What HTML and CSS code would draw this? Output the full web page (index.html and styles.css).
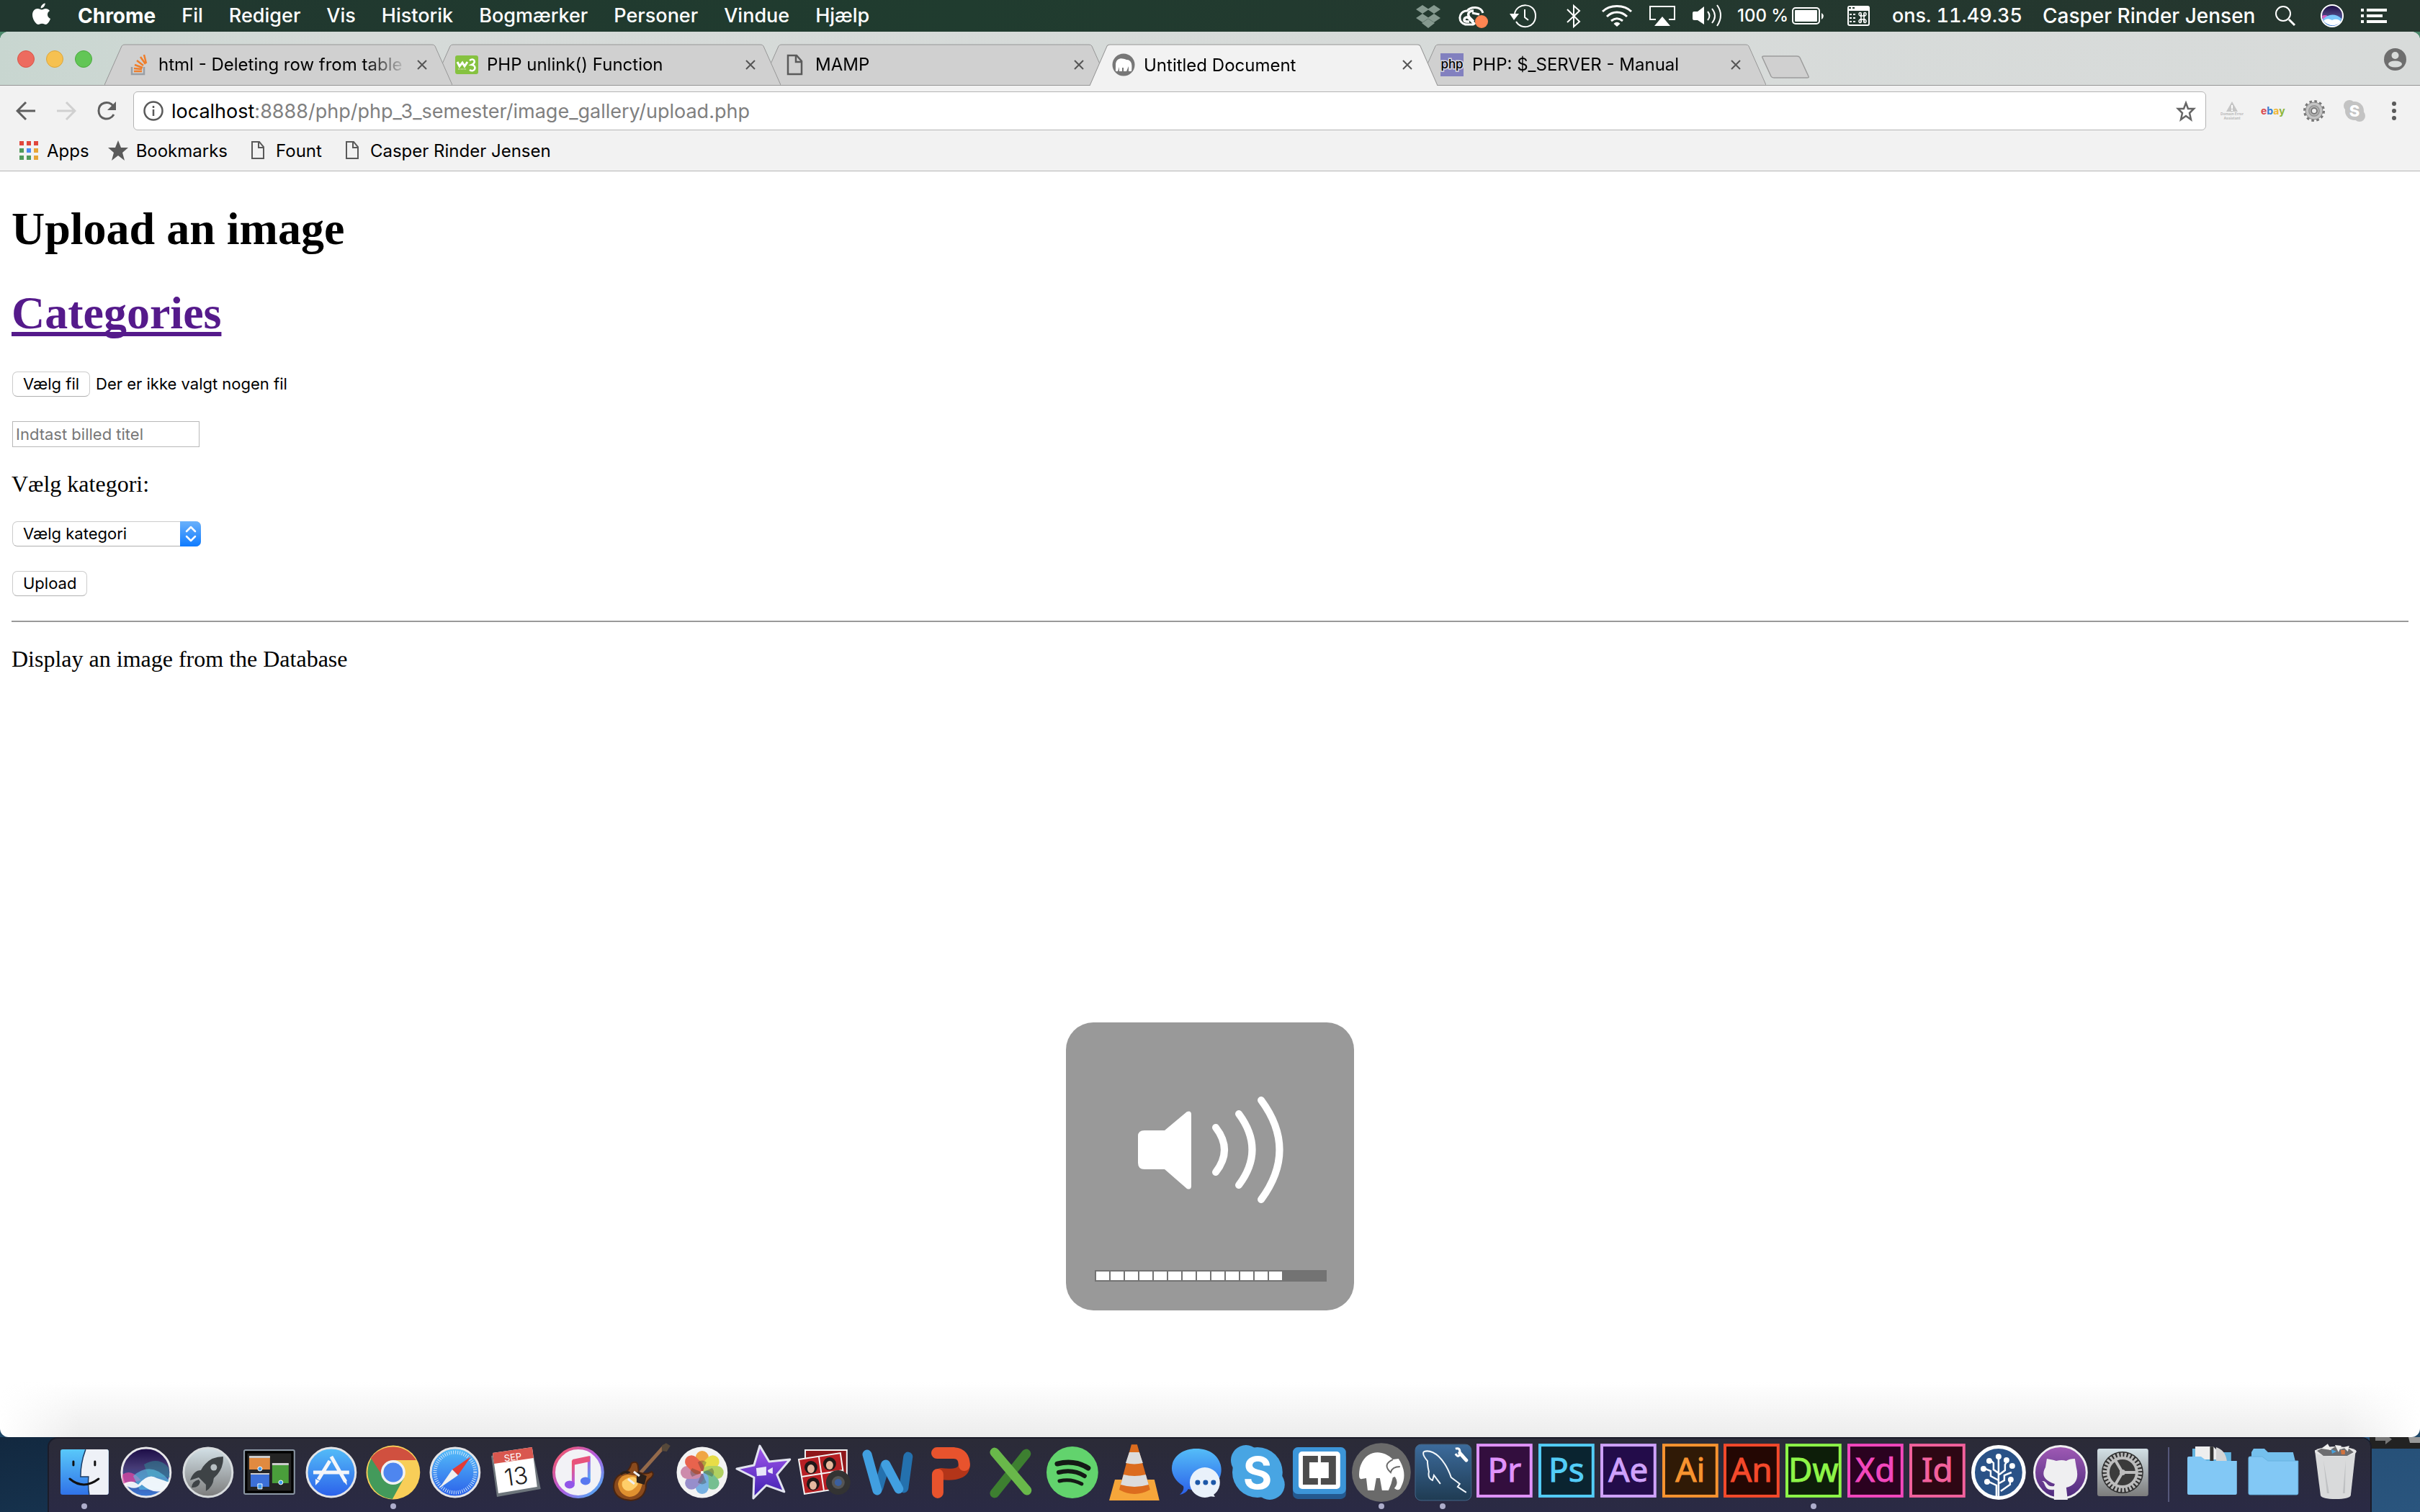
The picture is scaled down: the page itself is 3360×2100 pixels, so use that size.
FILE: index.html
```html
<!DOCTYPE html>
<html lang="da">
<head>
<meta charset="utf-8">
<title>Untitled Document</title>
<link rel="stylesheet" href="styles.css">
</head>
<body>
<header class="menubar">
  <nav class="menus" aria-label="Menulinje">
    <button class="menu-logo" aria-label="Apple"><svg width="28" height="44" viewBox="0 0 28 44"><path fill="#fff" d="M18.700 4.500c.3 3-2.700 7-6 7-.4-3.200 2.800-6.600 6-7zM19.500 12c2 0 4.200 1 5.500 3-4.500 2.800-3.800 9 1 11-1.200 3.300-3.800 8-6.600 8-2 0-2.600-1.200-5-1.200S11.200 34 9.300 34C5.700 34 1 26.500 1 20.700 1 15 4.500 12 8.300 12c2.400 0 4 1.400 5.700 1.400 1.600 0 3.200-1.400 5.500-1.400z"/></svg></button>
    <button class="menu menu-app">Chrome</button>
    <button class="menu">Fil</button>
    <button class="menu">Rediger</button>
    <button class="menu">Vis</button>
    <button class="menu">Historik</button>
    <button class="menu">Bogmærker</button>
    <button class="menu">Personer</button>
    <button class="menu">Vindue</button>
    <button class="menu">Hjælp</button>
  </nav>
  <div class="status">
    <svg width="58" height="44" viewBox="1954 0 58 44" fill="#85998f"><path d="M1975 7l9 6-9 6-9-6zM1991 7l9 6-9 6-9-6zM1975 19l9 6-9 6-9-6zM1991 19l9 6-9 6-9-6zM1974 32l9-6 9 6-9 7z"/></svg>
    <svg width="69" height="44" viewBox="2012 0 69 44" fill="none" stroke="#fff"><path stroke-width="3" d="M2046 34h-9c-14 0-13-19 0-19 5-6 19-7 22 3"/><path stroke-width="3.500" d="M2048 34l-9-9c-5-4-9 5-3 5h4M2046 15c-8 0-9 6-5 10l5 5"/><path stroke-width="3" d="M2044 18l10 2"/><circle cx="2057" cy="30" r="9" fill="#ff8552" stroke="none"/></svg>
    <svg width="73" height="44" viewBox="2081 0 73 44" fill="none" stroke="#fff" stroke-width="2"><path d="M2103 19c3-16 29-16 29 3 0 17-20 20-27 8M2117 13v11l5 4"/><path fill="#fff" stroke="none" d="M2096 19h13l-7 9z"/></svg>
    <svg width="55" height="44" viewBox="2154 0 55 44" fill="none" stroke="#fff" stroke-width="2"><path d="M2176 13l17 17-8 7V8l8 7-17 16"/></svg>
    <svg width="69" height="44" viewBox="2209 0 69 44" fill="none" stroke="#fff" stroke-width="3"><path d="M2225 16c10-10 30-10 40 0M2231 23c8-8 20-8 28 0M2237 29c5-4 11-4 16 0"/><path fill="#fff" stroke="none" d="M2240.500 33c3-3 6-3 9 0l-4.500 4z"/></svg>
    <svg width="60" height="44" viewBox="2278 0 60 44"><path fill="none" stroke="#fff" stroke-width="2" d="M2299 27h-8V9h34v18h-8"/><path fill="#fff" d="M2308 23l11 13h-22z"/></svg>
    <svg width="64" height="44" viewBox="2338 0 64 44" fill="none" stroke="#fff" stroke-width="2"><path fill="#fff" stroke="none" d="M2350 18q0-2 2-2h5l9-7v25l-9-6h-5q-2 0-2-2z"/><path d="M2371 16q5 6 0 12M2377 12q8 10 0 20M2384 7q10 14 0 29"/></svg>
    <span class="percent">100 %</span>
    <svg width="65" height="44" viewBox="2484 0 65 44"><rect x="2489" y="11" width="37" height="22" rx="4" fill="none" stroke="#fff" stroke-width="2"/><rect x="2492" y="14" width="31" height="16" rx="1" fill="#fff"/><path fill="#fff" d="M2529 18q6 4 0 9z"/></svg>
    <svg width="68" height="44" viewBox="2549 0 68 44"><rect x="2566" y="9" width="29" height="26" rx="2" fill="none" stroke="#fff" stroke-width="2"/><path fill="#fff" d="M2566 9h29v6h-29z"/><path stroke="#23392f" stroke-width="2" stroke-dasharray="3 2" d="M2567 11h10"/><path stroke="#fff" stroke-width="2" stroke-dasharray="3 2" d="M2568 20h8M2568 25h8M2568 30h8"/><path fill="none" stroke="#fff" stroke-width="1.500" d="M2582 22h8M2582 27h8M2584 19v12M2588 19v12"/><path fill="none" stroke="#fff" stroke-width="1.500" d="M2584 22c-5 0-3-6 0-4zM2588 22c5 0 3-6 0-4zM2584 27c-5 0-3 6 0 4zM2588 27c5 0 3 6 0 4z"/></svg>
    <time class="clock">ons. 11.49.35</time>
    <span class="user">Casper Rinder Jensen</span>
    <svg width="64" height="44" viewBox="3141 0 64 44" fill="none" stroke="#fff" stroke-width="2"><circle cx="3170" cy="19" r="10"/><path stroke-width="3" d="M3178 27l8 8"/></svg>
    <svg width="61" height="44" viewBox="3205 0 61 44"><circle cx="3238" cy="22" r="15" fill="url(#siri)" stroke="#fff" stroke-width="2"/><path fill="#d95fc0" d="M3224 22q7-3 11 4l-9 3z"/><path fill="#7cc7fb" d="M3225 27c7-8 18-9 26-1-3 11-20 13-26 1z"/><path fill="#fff" d="M3226 29c6-5 9-2 12-1 4-2 9-2 12 2-5 7-17 7-24-1z"/></svg>
    <svg class="status-list" width="54" height="44" viewBox="3266 0 54 44" fill="#fff"><path d="M3278 12h4v4h-4zM3278 20h4v4h-4zM3278 28h4v4h-4zM3286 12h28v4h-28zM3286 20h22v4h-22zM3286 28h28v4h-28z"/></svg>
  </div>
</header>

<div class="window">
  <div class="tabstrip">
    <div class="lights">
      <button class="light light-close" aria-label="Luk"></button>
      <button class="light light-min" aria-label="Minimer"></button>
      <button class="light light-zoom" aria-label="Zoom"></button>
    </div>
    <div class="tab tab-1">
      <svg class="tab-shape" viewBox="0 0 483 57" preserveAspectRatio="none"><path d="M0 57L24 3q1-2 4-2h427q3 0 4 2l24 54"/></svg>
      <svg class="favicon" viewBox="0 0 32 32" fill="none" stroke-width="2.500"><path stroke="#9a9fa5" d="M7 19v10h17V19"/><path stroke="#ef7e2b" d="M10 25h11M10 21l11 1M11 16l11 4M14 10l9 7M19 5l7 10M24 2l3 12"/></svg>
      <span class="tab-title">html - Deleting row from table a</span>
      <button class="tab-close" aria-label="Luk fane"><svg viewBox="0 0 16 16"><path d="M2 2l12 12M14 2L2 14"/></svg></button>
    </div>
    <div class="tab tab-2">
      <svg class="tab-shape" viewBox="0 0 483 57" preserveAspectRatio="none"><path d="M0 57L24 3q1-2 4-2h427q3 0 4 2l24 54"/></svg>
      <svg class="favicon" viewBox="0 0 32 32"><rect y="3" width="32" height="26" rx="3" fill="#86c240"/><path fill="none" stroke="#fff" stroke-width="3" d="M3 12l3 6 4-5 3 5 4-6"/><path fill="none" stroke="#fff" stroke-width="2.500" d="M20 10c6-5 10 3 3 6 8 1 4 12-3 7"/><path stroke="#fff" stroke-width="1" stroke-dasharray="1 1" d="M4 22h12"/></svg>
      <span class="tab-title">PHP unlink() Function</span>
      <button class="tab-close" aria-label="Luk fane"><svg viewBox="0 0 16 16"><path d="M2 2l12 12M14 2L2 14"/></svg></button>
    </div>
    <div class="tab tab-3">
      <svg class="tab-shape" viewBox="0 0 483 57" preserveAspectRatio="none"><path d="M0 57L24 3q1-2 4-2h427q3 0 4 2l24 54"/></svg>
      <svg class="favicon" viewBox="0 0 32 32" fill="none" stroke="#5a5a5a" stroke-width="2.500"><path d="M6 3h12l7 8v18H6zM17 3v9h8"/></svg>
      <span class="tab-title">MAMP</span>
      <button class="tab-close" aria-label="Luk fane"><svg viewBox="0 0 16 16"><path d="M2 2l12 12M14 2L2 14"/></svg></button>
    </div>
    <div class="tab tab-4 tab-active">
      <svg class="tab-shape" viewBox="0 0 483 57" preserveAspectRatio="none"><path d="M0 57L24 3q1-2 4-2h427q3 0 4 2l24 54"/></svg>
      <svg class="favicon" viewBox="0 0 32 32"><circle cx="16" cy="16" r="15.500" fill="#777"/><path fill="#fff" d="M5 25V15c1-9 9-9 15-6 8 0 8 8 7 16h-4v-7l-3 7h-4v-5h-2v5h-4v-6l-2 6z"/></svg>
      <span class="tab-title">Untitled Document</span>
      <button class="tab-close" aria-label="Luk fane"><svg viewBox="0 0 16 16"><path d="M2 2l12 12M14 2L2 14"/></svg></button>
    </div>
    <div class="tab tab-5">
      <svg class="tab-shape" viewBox="0 0 483 57" preserveAspectRatio="none"><path d="M0 57L24 3q1-2 4-2h427q3 0 4 2l24 54"/></svg>
      <svg class="favicon" viewBox="0 0 32 32"><path fill="#8280bf" d="M0 0h32v32H0z"/><text x="16" y="21" text-anchor="middle" font-family="Inter, sans-serif" font-size="17" font-weight="500" stroke="#d8d8e0" stroke-width="3" paint-order="stroke">php</text></svg>
      <span class="tab-title">PHP: $_SERVER - Manual</span>
      <button class="tab-close" aria-label="Luk fane"><svg viewBox="0 0 16 16"><path d="M2 2l12 12M14 2L2 14"/></svg></button>
    </div>
    <button class="newtab" aria-label="Ny fane"><svg width="68" height="34" viewBox="0 0 68 34"><path fill="#d0d0d0" stroke="#9c9c9c" stroke-width="1.500" d="M3 2h46q3 0 4 2l12 26q1 2-2 2H17q-3 0-4-2L1 4q-1-2 2-2z"/></svg></button>
    <button class="profile" aria-label="Profil"><svg width="31" height="31" viewBox="0 0 31 31"><circle cx="15.500" cy="15.500" r="15.500" fill="#6e6e6e"/><circle cx="15.500" cy="10" r="5" fill="#d8dbda"/><ellipse cx="15.500" cy="22" rx="9.500" ry="4.500" fill="#d8dbda"/></svg></button>
  </div>

  <div class="toolbar">
    <button class="tool" aria-label="Tilbage"><svg viewBox="0 0 28 28" stroke="#5f5f5f"><path d="M27 14H3M14 2L2 14l12 12"/></svg></button>
    <button class="tool" aria-label="Frem"><svg viewBox="0 0 28 28" stroke="#d0d0d0"><path d="M1 14h24M14 2l12 12-12 12"/></svg></button>
    <button class="tool" aria-label="Genindlæs"><svg viewBox="0 0 28 28" stroke="#5f5f5f"><path d="M23 7C17-1 3 2 3 14s15 15 21 5"/><path fill="#5f5f5f" stroke="none" d="M27 1v12H15z"/></svg></button>
    <div class="omnibox">
      <svg class="info" viewBox="0 0 28 28" fill="none" stroke="#5a5a5a" stroke-width="2.500"><circle cx="14" cy="14" r="12.500"/><path d="M14 12v9M14 7v3"/></svg>
      <a class="url" href="#"><span class="host">localhost</span>:8888/php/php_3_semester/image_gallery/upload.php</a>
      <svg class="bookmark-star" viewBox="0 0 30 30" fill="none" stroke="#666" stroke-width="2.500"><path d="M15 4l3 8h8l-6 6 2 9-7-5-7 5 2-9-6-6h8z"/></svg>
    </div>
    <div class="extensions">
      <svg width="32" height="32" viewBox="0 0 32 32"><path fill="#c6c6c6" d="M16 3l8 14H8z"/><path stroke="#fff" stroke-width="2" d="M16 8v5M16 14v2"/><text x="16" y="22" text-anchor="middle" font-family="Inter, sans-serif" font-size="5" font-weight="700" fill="#bbb">Domain Error</text><text x="16" y="28" text-anchor="middle" font-family="Inter, sans-serif" font-size="5" font-weight="700" fill="#bbb">Assistant</text></svg>
      <svg width="34" height="32" viewBox="0 0 34 32" font-family="Inter, sans-serif" font-size="14" font-weight="700"><text x="0" y="21"><tspan fill="#d9454a">e</tspan><tspan fill="#3b7dd0">b</tspan><tspan fill="#f0b735">a</tspan><tspan fill="#8db63b">y</tspan></text></svg>
      <svg width="32" height="32" viewBox="0 0 32 32"><circle cx="16" cy="16" r="13" fill="none" stroke="#777" stroke-width="4" stroke-dasharray="3.500 3.300"/><circle cx="16" cy="16" r="12" fill="#c4c4c4" stroke="#888"/><circle cx="16" cy="16" r="7" fill="none" stroke="#999" stroke-width="2"/><circle cx="16" cy="16" r="4" fill="#eee" stroke="#777" stroke-width="2"/></svg>
      <svg width="32" height="32" viewBox="0 0 32 32"><circle cx="16" cy="16" r="13" fill="#c3c3c3"/><circle cx="9" cy="9" r="8" fill="#c3c3c3"/><circle cx="23" cy="23" r="8" fill="#c3c3c3"/><text x="16" y="24" text-anchor="middle" font-family="Inter, sans-serif" font-size="22" font-weight="800" fill="#fff">S</text></svg>
    </div>
    <button class="more" aria-label="Flere"><svg width="8" height="28" viewBox="0 0 8 28" fill="#5a5a5a"><circle cx="4" cy="4" r="3"/><circle cx="4" cy="14" r="3"/><circle cx="4" cy="24" r="3"/></svg></button>
  </div>

  <nav class="bookmarks" aria-label="Bogmærker">
    <a class="bookmark" href="#"><svg width="28" height="28" viewBox="0 0 28 28"><path fill="#e0473c" d="M1 1h6v6H1zM11 1h6v6h-6zM21 1h6v6h-6z"/><path fill="#519a5b" d="M1 11h6v6H1zM1 21h6v6H1z"/><path fill="#4a8af4" d="M11 11h6v6h-6z"/><path fill="#e7a537" d="M21 11h6v6h-6zM21 21h6v6h-6z"/><path fill="#519a5b" d="M11 21h6v6h-6z"/></svg>Apps</a>
    <a class="bookmark" href="#"><svg width="28" height="28" viewBox="0 0 28 28"><path fill="#5a5a5a" d="M14 0l4 10h10l-8 7 3 11-9-7-9 7 3-11-8-7h10z"/></svg>Bookmarks</a>
    <a class="bookmark bookmark-page" href="#"><svg width="18" height="26" viewBox="0 0 18 26" fill="none" stroke="#5a5a5a" stroke-width="2"><path d="M1 1h10l6 7v16H1zM10 1v8h7"/></svg>Fount</a>
    <a class="bookmark bookmark-page" href="#"><svg width="18" height="26" viewBox="0 0 18 26" fill="none" stroke="#5a5a5a" stroke-width="2"><path d="M1 1h10l6 7v16H1zM10 1v8h7"/></svg>Casper Rinder Jensen</a>
  </nav>

  <main class="page">
    <h1>Upload an image</h1>
    <h1><a href="#" class="visited">Categories</a></h1>
    <form class="upload">
      <div class="file"><input type="file" id="file" class="file-input"><label for="file" class="control file-button">Vælg fil</label><span class="file-name">Der er ikke valgt nogen fil</span></div>
      <input class="text" type="text" placeholder="Indtast billed titel" aria-label="Billedtitel">
      <label class="copy" for="category">Vælg kategori:</label>
      <div class="select">
        <select id="category" class="control category"><option>Vælg kategori</option></select>
        <svg class="arrows" width="29" height="35" viewBox="0 0 29 35"><path fill="none" stroke="#fff" stroke-width="2.500" stroke-linecap="round" stroke-linejoin="round" d="M9 14l6-6 6 6M9 21l6 6 6-6"/></svg>
      </div>
      <button type="button" class="control submit">Upload</button>
      <hr>
      <p class="copy">Display an image from the Database</p>
    </form>
  </main>
</div>

<div class="hud" role="status" aria-label="Lydstyrke">
  <svg class="hud-icon" viewBox="0 0 400 300" fill="none" stroke="#fff" stroke-width="10" stroke-linecap="round"><path fill="#fff" stroke="none" d="M100 158q0-8 9-8h28l31-26q6-2 6 4v99q0 6-6 4l-31-27h-28q-9 0-9-9z"/><path d="M208 146q24 31 0 62M240 127q37 50 0 99M271 108q51 69 0 138"/></svg>
  <div class="level"><i></i><i></i><i></i><i></i><i></i><i></i><i></i><i></i><i></i><i></i><i></i><i></i><i></i></div>
</div>

<footer class="desktop">
  <svg class="desktop-peek" width="70" height="16" viewBox="0 0 70 16"><path fill="#222" d="M0 0h70v16H0z"/><path fill="#777" d="M8 0h14v-4l9 7-9 7V5H8z"/><path fill="#999" d="M54 0h16v8H56z"/></svg>
  <nav class="dock" aria-label="Dock">
    <button class="app running" aria-label="Finder"><svg viewBox="0 0 86 102"><rect x="10" y="15" width="67" height="63" rx="3" fill="url(#finder)"/><path fill="#eef1f7" d="M45 15h29q3 0 3 3v57q0 3-3 3H50q-2-10-1-25H38q0-20 7-38z"/><path fill="none" stroke="#1d3d66" stroke-width="1.500" d="M45 15q-7 18-7 38h11q-1 15 1 25"/><path fill="none" stroke="#111" stroke-width="3" stroke-linecap="round" d="M28 32v5M58 32v5M23 56q19 16 40 0"/></svg></button>
    <button class="app" aria-label="Siri"><svg viewBox="0 0 86 102"><circle cx="43" cy="47" r="34" fill="url(#siri)" stroke="#e8e8ea" stroke-width="3"/><path fill="#2f8f9a" opacity=".5" d="M40 36q20-12 34 4l2 14-30-2z"/><path fill="#e0459f" opacity=".75" d="M10 50q12-9 26 8l-24 6q-3-8-2-14z"/><path fill="#5bc5e8" opacity=".6" d="M25 52q25-22 50 6l-8 13H34z"/><path fill="#fff" opacity=".9" d="M11 63q13-7 21 1 14-17 26-9 10 3 17 6-5 10-12 12-12 3-26-9-10 10-26-1z"/></svg></button>
    <button class="app" aria-label="Launchpad"><svg viewBox="0 0 86 102"><circle cx="43" cy="47" r="34" fill="url(#silver)" stroke="#d8dcde" stroke-width="3"/><path fill="#3e4346" d="M64 25q-21 0-31 19-10 0-15 14l12-4 10 10v9q10-6 11-18 14-12 13-30zM30 57q-9 2-10 11 10 1 12-8z"/><circle cx="51" cy="40" r="4.500" fill="#b8c0c3"/></svg></button>
    <button class="app" aria-label="Mission Control"><svg viewBox="0 0 86 102"><rect x="8" y="16" width="70" height="61" rx="2" fill="#242424" stroke="#8b97a4" stroke-width="2"/><path fill="none" stroke="#000" stroke-width="3" d="M11 19h64v55H11z"/><path fill="#e08a40" d="M15 25h29v18H15z"/><path fill="#4a9e3b" d="M47 35h23v27H47z"/><path fill="#3c70d8" d="M17 48h26v19H17z"/><path fill="#ccc" d="M15 24h29v3H15zM47 34h23v3H47zM17 48h26v2H17z"/><g fill="#3f9cf0" stroke="#fff"><circle cx="30" cy="42" r="3"/><circle cx="59" cy="61" r="3"/><path d="M27 63h6v7h-6z"/></g></svg></button>
    <button class="app" aria-label="App Store"><svg viewBox="0 0 86 102"><circle cx="43" cy="47" r="34" fill="url(#blue)" stroke="#e4e4e6" stroke-width="3"/><g fill="none" stroke="#f4f6fa" stroke-width="5"><path d="M18 47h50M41 31L25 57M43 25l20 35"/></g><path fill="#f4f6fa" d="M21 56l6 3-6 6zM59 58l5-2 1 9z"/></svg></button>
    <button class="app running" aria-label="Chrome"><svg viewBox="0 0 86 102"><circle cx="43" cy="47" r="37.500" fill="#f8ce58"/><path fill="#439a5b" d="M43 47L13 27A37.500 37.500 0 0 0 42 84l16-29z"/><path fill="#d0503f" d="M12 27a37.500 37.500 0 0 1 63 3H43L27 50z"/><circle cx="43" cy="47" r="17" fill="#f2f2f2"/><circle cx="43" cy="47" r="13.500" fill="#4e86ef"/></svg></button>
    <button class="app" aria-label="Safari"><svg viewBox="0 0 86 102"><circle cx="43" cy="47" r="34" fill="url(#blue)" stroke="#e4e4e6" stroke-width="3"/><circle cx="43" cy="47" r="28" fill="none" stroke="#cfe6fb" stroke-width="5" stroke-dasharray="1 2"/><path fill="#e33c37" d="M65 25L47 51l-8-8z"/><path fill="#f0f0f0" d="M21 69l18-26 8 8z"/></svg></button>
    <button class="app" aria-label="Kalender"><svg viewBox="0 0 86 102"><path fill="#6d757b" d="M8 24l57-10 12 56-61 11z"/><path fill="#fff" d="M10 20l55-8 7 55-54 9z"/><path fill="#d9574f" d="M10 20l55-8 2 15-55 8z"/><g transform="rotate(-8 43 47)" text-anchor="middle" font-family="Inter, sans-serif"><text x="41" y="30" font-size="13" fill="#fff">SEP</text><text x="42" y="64" font-size="33" fill="#222" font-weight="300">13</text></g></svg></button>
    <button class="app" aria-label="iTunes"><svg viewBox="0 0 86 102"><circle cx="43" cy="47" r="34" fill="#f2f2f6" stroke="url(#pinkblue)" stroke-width="4"/><path fill="none" stroke="url(#pinkblue)" stroke-width="4" d="M36 63V32l22-5v31"/><path fill="#e8527c" d="M35 29l24-5v8l-24 5z"/><ellipse cx="31" cy="64" rx="7" ry="5.500" fill="#9256e8"/><ellipse cx="53" cy="59" rx="7" ry="5.500" fill="#5878f0"/></svg></button>
    <button class="app" aria-label="GarageBand"><svg viewBox="0 0 86 102"><path stroke="#946a4b" stroke-width="5" d="M43 48l34-38"/><path fill="#55483a" d="M73 10l6-4 6 4-5 8-7-1z"/><path fill="#8a4a1c" stroke="#4b2510" stroke-width="2" d="M31 34q8-4 9 4l1 9q9 4 18-1 5 4-3 10-6 5-5 12-3 17-21 18-22-1-24-18 0-15 12-19 10-3 13-15z"/><path fill="#e0912f" d="M12 63q2-12 14-13l14 2 6 10q-3 18-18 19-14-2-16-18z"/><path fill="#ffce69" d="M18 60q10-9 18-6 6 5 3 11-8 10-16 7-7-4-5-12z"/><path fill="#2c211b" d="M38 46l14 6-3 12-11-3zM15 48q8-6 15-1l-5 2q-5-2-8 2z"/><path stroke="#eee" stroke-width="3" d="M26 56l9 7M34 46l8 6"/></svg></button>
    <button class="app" aria-label="Fotos"><svg viewBox="0 0 86 102"><circle cx="43" cy="47" r="35.500" fill="#f3f3f3"/><g opacity=".95"><rect x="34" y="17" width="18" height="30" rx="9" fill="#f0a23c"/><rect x="34" y="17" width="18" height="30" rx="9" fill="#e8dc3e" transform="rotate(45 43 47)"/><rect x="34" y="17" width="18" height="30" rx="9" fill="#aed05a" transform="rotate(90 43 47)"/><rect x="34" y="17" width="18" height="30" rx="9" fill="#70bd8c" transform="rotate(135 43 47)"/><rect x="34" y="17" width="18" height="30" rx="9" fill="#72aee2" transform="rotate(180 43 47)"/><rect x="34" y="17" width="18" height="30" rx="9" fill="#9389c9" transform="rotate(225 43 47)"/><rect x="34" y="17" width="18" height="30" rx="9" fill="#cc86a8" transform="rotate(270 43 47)"/><rect x="34" y="17" width="18" height="30" rx="9" fill="#e85c45" transform="rotate(315 43 47)"/></g><g fill="#3d3a2c" opacity=".35"><path d="M43 47l-6-14q6-5 12 0z"/><path d="M43 47l-6-14q6-5 12 0z" transform="rotate(90 43 47)"/><path d="M43 47l-6-14q6-5 12 0z" transform="rotate(180 43 47)"/><path d="M43 47l-6-14q6-5 12 0z" transform="rotate(270 43 47)"/></g><circle cx="43" cy="47" r="2" fill="#fff"/></svg></button>
    <button class="app" aria-label="iMovie"><svg viewBox="0 0 86 102"><path fill="url(#purple)" stroke="#e2e4ef" stroke-width="3" stroke-linejoin="round" d="M38 10l13 22 29-3-18 21 10 24-25-9-18 18 1-29L6 42l24-5z"/><path fill="#e8e6f8" d="M33 41l14-2v12l-13 1zM49 44l7-4v9l-6-2z"/></svg></button>
    <button class="app" aria-label="Photo Booth"><svg viewBox="0 0 86 102"><path fill="#8f171b" stroke="#f4f4f4" stroke-width="2" d="M15 16h58v45H15z"/><path fill="#b81f24" stroke="#f4f4f4" stroke-width="2" d="M6 29l58-9 7 48-57 9z"/><path stroke="#f4f4f4" stroke-width="2" d="M34 25l7 47M10 53l58-9"/><g fill="#201818"><circle cx="23" cy="40" r="9"/><circle cx="49" cy="35" r="9"/><circle cx="26" cy="63" r="9"/></g><g fill="#e6b79e"><ellipse cx="23" cy="42" rx="5" ry="6"/><ellipse cx="49" cy="37" rx="5" ry="6"/><ellipse cx="26" cy="65" rx="5" ry="6"/></g><circle cx="61" cy="61" r="17" fill="#333"/><circle cx="61" cy="61" r="9" fill="#555"/><circle cx="61" cy="61" r="5" fill="#3b5f9e"/></svg></button>
    <button class="app" aria-label="Word"><svg viewBox="0 0 86 102" fill="none" stroke-width="13" stroke-linecap="round"><path stroke="#2471ae" d="M72 25l-6 44M31 68l9-31"/><path stroke="#419fe0" d="M15 22l14 50M41 36l18 34"/></svg></button>
    <button class="app" aria-label="PowerPoint"><svg viewBox="0 0 86 102" fill="none" stroke-width="16" stroke-linecap="round"><path stroke="#b33519" d="M31 49q34 4 33-14"/><path stroke="#e8532d" d="M26 20h24q14 1 14 17M27 75V50"/></svg></button>
    <button class="app" aria-label="Excel"><svg viewBox="0 0 86 102" fill="none" stroke-width="13" stroke-linecap="round"><path stroke="#3d7f30" d="M65 21L21 76"/><path stroke="#69b84a" d="M21 19l45 53"/></svg></button>
    <button class="app" aria-label="Spotify"><svg viewBox="0 0 86 102"><circle cx="43" cy="47" r="36" fill="#62d36d"/><path fill="none" stroke="#141a15" stroke-linecap="round" d="M22 35q24-6 43 6" stroke-width="7"/><path fill="none" stroke="#141a15" stroke-linecap="round" d="M24 47q20-5 36 5" stroke-width="6"/><path fill="none" stroke="#141a15" stroke-linecap="round" d="M25 59q16-4 31 4" stroke-width="5"/></svg></button>
    <button class="app" aria-label="VLC"><svg viewBox="0 0 86 102"><path fill="#f6a63a" d="M16 57h55l7 29H8z"/><path fill="#dc6c1e" d="M39 8h8l18 63q-22 12-43 0z"/><path fill="#dcdcdc" d="M36 19h14l5 15q-12 3-24 0zM28 50q15 4 31 0l4 14q-20 6-39 0z"/></svg></button>
    <button class="app" aria-label="Beskeder"><svg viewBox="0 0 86 102"><path fill="url(#blue)" d="M43 14c47 0 46 60 0 58-4 0-8-1-11-2q-4 7-12 8 7-6 5-12C-4 48 9 14 43 14z"/><circle cx="55" cy="61" r="21" fill="#e9f1fa"/><path fill="#e9f1fa" d="M60 80l9 1-4-8z"/><g fill="#1d58a8"><circle cx="45" cy="61" r="3.500"/><circle cx="56" cy="61" r="3.500"/><circle cx="67" cy="61" r="3.500"/></g></svg></button>
    <button class="app" aria-label="Skype"><svg viewBox="0 0 86 102" fill="#48a5e3"><circle cx="43" cy="47" r="35"/><circle cx="27" cy="30" r="21"/><circle cx="60" cy="64" r="21"/><text x="43" y="70" text-anchor="middle" font-family="Inter, sans-serif" font-size="62" font-weight="700" fill="#fff">S</text></svg></button>
    <button class="app" aria-label="Brackets"><svg viewBox="0 0 86 102"><rect x="6" y="20" width="74" height="64" rx="7" fill="#24598f"/><rect x="6" y="12" width="74" height="65" rx="7" fill="#3c95d8"/><rect x="14" y="18" width="58" height="52" rx="5" fill="#fff"/><path fill="#4c4c4c" d="M20 24h21v9H29v22h12v9H20zM45 24h21v40H45v-9h11V33H45z"/></svg></button>
    <button class="app running" aria-label="MAMP"><svg viewBox="0 0 86 102"><circle cx="43" cy="47" r="41" fill="#6a6a6a"/><path fill="#fff" d="M16 56q-6 2-3-15c7-26 32-27 46-12l8-1q13 20 4 38-3 9-10 3 7-7 1-16l-3 1q-2 10-6 18h-9l-3-17-5 0-3 17h-9l-2-17z"/><path fill="none" stroke="#6a6a6a" stroke-width="2" d="M59 29q-15 7-3 18 2-8 13-8"/></svg></button>
    <button class="app running" aria-label="MySQL Workbench"><svg viewBox="0 0 86 102"><rect x="4" y="8" width="78" height="78" rx="8" fill="url(#navy)" stroke="#43688b"/><path fill="none" stroke="#f2f7fb" stroke-width="2" d="M16 18c13-4 29 10 38 36l12 9-3 4 12 8M16 18q-3 4 5 13 0 7 2 15-2 9 5 12l2-7 9 12"/><path stroke="#fff" stroke-width="5" stroke-linecap="round" d="M66 20l9 10"/><path fill="none" stroke="#fff" stroke-width="3" d="M60 14q7-2 6 6t-6 1"/></svg></button>
    <button class="app" aria-label="Premiere"><svg class="adobe pr" viewBox="0 0 86 102"><rect x="6" y="9" width="74" height="71"/><text x="43" y="60">Pr</text></svg></button>
    <button class="app" aria-label="Photoshop"><svg class="adobe ps" viewBox="0 0 86 102"><rect x="6" y="9" width="74" height="71"/><text x="43" y="60">Ps</text></svg></button>
    <button class="app" aria-label="After Effects"><svg class="adobe ae" viewBox="0 0 86 102"><rect x="6" y="9" width="74" height="71"/><text x="43" y="60">Ae</text></svg></button>
    <button class="app" aria-label="Illustrator"><svg class="adobe ai" viewBox="0 0 86 102"><rect x="6" y="9" width="74" height="71"/><text x="43" y="60">Ai</text></svg></button>
    <button class="app" aria-label="Animate"><svg class="adobe an" viewBox="0 0 86 102"><rect x="6" y="9" width="74" height="71"/><text x="43" y="60">An</text></svg></button>
    <button class="app running" aria-label="Dreamweaver"><svg class="adobe dw" viewBox="0 0 86 102"><rect x="6" y="9" width="74" height="71"/><text x="43" y="60">Dw</text></svg></button>
    <button class="app" aria-label="Experience Design"><svg class="adobe xd" viewBox="0 0 86 102"><rect x="6" y="9" width="74" height="71"/><text x="43" y="60">Xd</text></svg></button>
    <button class="app" aria-label="InDesign"><svg class="adobe id" viewBox="0 0 86 102"><rect x="6" y="9" width="74" height="71"/><text x="43" y="60">Id</text></svg></button>
    <button class="app" aria-label="SourceTree"><svg viewBox="0 0 86 102"><circle cx="43" cy="47" r="35.500" fill="#2a5287" stroke="#fff" stroke-width="5"/><g fill="none" stroke="#fff" stroke-width="2.500"><path d="M43 80V25M40 80V65L27 59M43 58l-11-6V45l-10-4M43 48l-7-5V34l-5-5M44 50l8-6V36l4-6M44 62l7-4V51l10-4M46 73l13-9v-6"/></g><g fill="#fff"><circle cx="43" cy="25" r="4"/><circle cx="30" cy="31" r="4"/><circle cx="22" cy="42" r="4"/><circle cx="27" cy="60" r="4"/><circle cx="54" cy="30" r="4"/><circle cx="62" cy="38" r="4"/><circle cx="60" cy="57" r="4"/></g></svg></button>
    <button class="app" aria-label="GitHub"><svg viewBox="0 0 86 102"><circle cx="43" cy="47" r="36.500" fill="url(#github)" stroke="#f0f0f2" stroke-width="3"/><path fill="#efeff1" d="M24 28q11 2 13 3 8-2 14 0 4-3 12-3l2 12q6 23-14 28l2 17H34V71c-15 2-11-10-17-12 8-1 6 9 17 7l1-3C16 57 18 47 22 40z"/></svg></button>
    <button class="app" aria-label="Systemindstillinger"><svg viewBox="0 0 86 102"><rect x="8" y="14" width="71" height="66" rx="3" fill="url(#silver)"/><circle cx="43" cy="47" r="29" fill="#2e2e2e"/><circle cx="43" cy="47" r="24" fill="none" stroke="#b9b9b9" stroke-width="7" stroke-dasharray="3 2"/><circle cx="43" cy="47" r="20" fill="#3b3b3b" stroke="#bdbdbd" stroke-width="4"/><path stroke="#bdbdbd" stroke-width="4" d="M43 47h20M43 47L33 30M43 47L33 64"/><circle cx="43" cy="47" r="4" fill="#bbb"/></svg></button>
    <span class="divider"></span>
    <button class="app" aria-label="Dokumenter"><svg viewBox="0 0 86 102"><path fill="#63b4e0" d="M15 14h14l4 5h36v20H15z"/><path fill="#eee" d="M19 11h25l18 18H19z"/><path stroke="#333" stroke-width="5" d="M42 11v20"/><path fill="#d5d5d5" d="M48 12q13 4 15 19H48z"/><path fill="#82c8f5" d="M8 27q0-2 2-2h17l8 6h42v45q0 2-2 2H10q-2 0-2-2z"/></svg></button>
    <button class="app" aria-label="Overførsler"><svg viewBox="0 0 86 102"><path fill="#75c0ed" d="M15 14h15l5 5h35l3 12H12V19z"/><path fill="#82c8f5" stroke="#68b3e0" d="M8 27q0-2 2-2h17l8 6h42v45q0 2-2 2H10q-2 0-2-2z"/></svg></button>
    <button class="app" aria-label="Papirkurv"><svg viewBox="0 0 86 102"><path fill="#d9dadb" d="M14 16h57l-7 63q-2 5-21 5t-21-5z"/><path fill="#bfc1c3" d="M26 30l5 46h3zM57 30l-4 46h3z"/><ellipse cx="43" cy="18" rx="29" ry="7" fill="#e6e6e6"/><path fill="#6d6d70" d="M17 17l12-6 6 5 8-5 7 4 9-3 9 7-9 5H26z"/><path fill="#eee" d="M23 14l9-7 5 9zM42 9l9 1-4 9zM54 12l8-2-2 8z"/><path fill="#48a0db" d="M37 15l7 3-6 3z"/><path fill="#d2733e" d="M50 16h6v6h-5z"/></svg></button>
  </nav>
</footer>

<svg class="defs" width="0" height="0" aria-hidden="true">
  <defs>
    <linearGradient id="finder" x2="0" y2="1"><stop stop-color="#59c8fa"/><stop offset="1" stop-color="#3073e8"/></linearGradient>
    <linearGradient id="siri" x2="0" y2="1"><stop stop-color="#1b0b45"/><stop offset=".4" stop-color="#453a75"/><stop offset="1" stop-color="#3a79d8"/></linearGradient>
    <linearGradient id="silver" x2="0" y2="1"><stop stop-color="#d3e0e6"/><stop offset="1" stop-color="#7c7c7c"/></linearGradient>
    <linearGradient id="blue" x2="0" y2="1"><stop stop-color="#54bdf8"/><stop offset="1" stop-color="#2b60ea"/></linearGradient>
    <linearGradient id="pinkblue" x2="1" y2="1"><stop stop-color="#fb5657"/><stop offset=".5" stop-color="#b45be0"/><stop offset="1" stop-color="#3db8f8"/></linearGradient>
    <linearGradient id="purple" x2="0" y2="1"><stop stop-color="#a557ee"/><stop offset="1" stop-color="#3a1fae"/></linearGradient>
    <linearGradient id="navy" x2="0" y2="1"><stop stop-color="#3c6b9c"/><stop offset="1" stop-color="#1f3b52"/></linearGradient>
    <linearGradient id="github" x2="0" y2="1"><stop stop-color="#a05ab5"/><stop offset="1" stop-color="#4b2a7c"/></linearGradient>
  </defs>
</svg>
</body>
</html>
```
FILE: styles.css
```css
* { box-sizing: border-box; }

body {
  margin: 0;
  min-height: 100vh;
  display: flex;
  flex-direction: column;
  background: linear-gradient(#4c8a6b, #1c4468);
  font-family: Inter, "Liberation Sans", sans-serif;
  color: #000;
}

button {
  padding: 0;
  border: 0;
  background: none;
  color: inherit;
  font: inherit;
}

a { color: inherit; text-decoration: none; }
svg { display: block; }
.defs { position: absolute; }

/* Menu bar */
.menubar {
  display: flex;
  justify-content: space-between;
  height: 44px;
  background: linear-gradient(90deg, #21372f, #203c2f 40%, #23392f 60%, #25362e);
  color: #fff;
  font-size: 27px;
  line-height: 44px;
  white-space: nowrap;
}
.menus { display: flex; gap: 36px; padding-left: 44px; }
.menu { font-weight: 500; }
.menu-app { font-size: 28px; font-weight: 700; }
.status { display: flex; padding-right: 40px; font-weight: 500; }
.percent { width: 82px; padding-left: 10px; font-size: 24px; }
.clock { width: 206px; padding-left: 10px; font-variant-numeric: tabular-nums; }
.user { width: 318px; padding-left: 13px; font-size: 28px; }

/* Browser window */
.window {
  position: relative;
  flex: 1;
  display: flex;
  flex-direction: column;
  border-radius: 12px;
  overflow: hidden;
  background: #fff;
}
.window::after {
  content: "";
  position: absolute;
  inset: auto 0 0;
  height: 76px;
  background: linear-gradient(transparent, #ececec);
  mask-image: linear-gradient(90deg, transparent, #000 110px, #000 calc(100% - 110px), transparent);
}

.tabstrip {
  position: relative;
  display: flex;
  align-items: flex-end;
  height: 75px;
  padding-right: 19px;
  border-bottom: 1px solid #969696;
  background: linear-gradient(90deg, #c8d6d0, #d5dad8 14%, #d8dbda);
}
.lights {
  display: flex;
  flex: none;
  gap: 16px;
  width: 172px;
  padding: 0 0 24px 24px;
}
.light { width: 24px; height: 24px; border-radius: 50%; }
.light-close { background: #ed6b5f; border: 1px solid #d85548; }
.light-min { background: #f6c151; border: 1px solid #dba53a; }
.light-zoom { background: #62c656; border: 1px solid #4ba93f; }

.tab {
  position: relative;
  flex: 0 1 483px;
  min-width: 0;
  display: flex;
  align-items: center;
  gap: 12px;
  height: 57px;
  margin-left: -27px;
  padding: 0 34px 0 31px;
  font-size: 24px;
}
.tab-1 { z-index: 4; }
.tab-2 { z-index: 3; }
.tab-3 { z-index: 2; }
.tab-4 { z-index: 5; }
.tab-5 { z-index: 1; }
.tab-shape {
  position: absolute;
  inset: 0;
  z-index: -1;
  width: 100%;
  height: 57px;
  fill: #d0d0d0;
  stroke: #969696;
  stroke-width: 1;
}
.tab-active { height: 58px; margin-bottom: -1px; }
.tab-active .tab-shape { height: 58px; fill: #f2f2f2; }
.favicon { flex: none; width: 32px; height: 32px; }
.tab-title {
  flex: 1;
  overflow: hidden;
  white-space: nowrap;
  mask-image: linear-gradient(90deg, #000 calc(100% - 60px), transparent);
}
.tab-close { width: 16px; height: 16px; }
.tab-close path { fill: none; stroke: #555; stroke-width: 2; }
.newtab { flex: none; margin: 0 0 8px -6px; }
.profile { margin: 0 0 20px auto; }

.toolbar {
  display: flex;
  align-items: center;
  height: 70px;
  padding: 0 32px 0 22px;
  background: #f2f2f2;
}
.tool { width: 28px; height: 28px; margin-right: 28px; }
.tool svg { fill: none; stroke-width: 3; }
.omnibox {
  flex: 1;
  display: flex;
  align-items: center;
  height: 54px;
  margin-left: -5px;
  padding: 0 12px 0 13px;
  border: 1px solid #b4b4b4;
  border-radius: 6px;
  background: #fff;
  font-size: 27px;
}
.info { width: 28px; height: 28px; margin-right: 11px; }
.url { flex: 1; color: #808080; }
.host { color: #000; }
.bookmark-star { width: 30px; height: 30px; }
.extensions { display: flex; gap: 24px; margin: 0 35px 0 20px; }

.bookmarks {
  display: flex;
  align-items: center;
  gap: 26px;
  height: 49px;
  padding: 0 0 8px 26px;
  border-bottom: 1px solid #b6b6b6;
  background: #f2f2f2;
  font-size: 24px;
}
.bookmark { display: flex; align-items: center; gap: 11px; white-space: nowrap; }
.bookmark-page { margin-left: 7px; gap: 16px; }

/* Page content */
.page { flex: 1; padding: 0 16px; font-family: "Liberation Serif", serif; }
h1 { margin: 43px 0; font-size: 64px; line-height: 74px; font-weight: 700; }
.visited {
  color: #551a8b;
  text-decoration: underline;
  text-decoration-thickness: 6px;
  text-underline-offset: 5px;
  text-decoration-skip-ink: none;
}
.upload {
  display: flex;
  flex-direction: column;
  align-items: flex-start;
  gap: 34px;
  margin-top: 44px;
}
.copy { margin: 0; font-size: 32px; line-height: 35px; }
.control, .text, .file-name {
  font-family: Inter, "Liberation Sans", sans-serif;
  font-size: 22px;
  line-height: 33px;
}
.control {
  height: 35px;
  margin-left: 1px;
  padding: 0 14px;
  border: 1px solid #ccc;
  border-bottom-color: #b0b0b0;
  border-radius: 7px;
  background: #fff;
  color: #000;
}
.file { display: flex; align-items: center; gap: 8px; height: 35px; }
.file-input { position: absolute; width: 1px; height: 1px; opacity: 0; }
.text {
  width: 260px;
  height: 36px;
  margin-left: 1px;
  padding: 0 4px;
  border: 1px solid #b8b8b8;
}
.text::placeholder { color: #777; }
.select { position: relative; }
.category { display: block; width: 262px; appearance: none; }
.arrows {
  position: absolute;
  top: 0;
  right: 0;
  border-radius: 0 7px 7px 0;
  background: linear-gradient(#6ab1fb, #0f7bff);
  pointer-events: none;
}
hr {
  width: 100%;
  height: 2px;
  margin: 0;
  border: 0;
  background: #999;
}

/* Volume overlay */
.hud {
  position: fixed;
  left: 50%;
  bottom: 280px;
  width: 400px;
  height: 400px;
  margin-left: -200px;
  border-radius: 38px;
  background: #999;
}
.hud-icon { width: 400px; height: 300px; }
.level {
  display: flex;
  gap: 2px;
  width: 322px;
  height: 16px;
  margin: 44px 0 0 40px;
  padding: 2px;
  background: #737373;
}
.level i { width: 18px; height: 12px; background: #fff; }

/* Dock */
.desktop {
  position: relative;
  height: 104px;
  padding: 2px 69px 0 68px;
  background: linear-gradient(170deg, #12283f, #1d4569 50%, #2a557e);
}
.desktop-peek { position: absolute; right: 0; top: 0; }
.dock {
  position: relative;
  display: flex;
  height: 102px;
  padding: 0 5px 0 6px;
  border-radius: 12px 12px 0 0;
  background: linear-gradient(#2b2b37, #2a2a45);
  box-shadow: 0 0 0 2px #1b1c29;
}
.app { position: relative; flex: 1; min-width: 0; }
.app svg { width: 100%; height: 102px; }
.running::after {
  content: "";
  position: absolute;
  left: calc(50% - 4px);
  bottom: 4px;
  width: 8px;
  height: 8px;
  border-radius: 50%;
  background: #adadcb;
}
.divider { width: 2px; height: 76px; margin: 12px 17px 0 20px; background: #56587a; }

.adobe rect { stroke: currentColor; stroke-width: 4; }
.adobe text {
  fill: currentColor;
  stroke: currentColor;
  stroke-width: 1;
  font-family: "Liberation Sans Narrow", "Noto Sans", sans-serif;
  font-size: 46px;
  text-anchor: middle;
}
.pr { color: #e093fb; fill: #330e3e; }
.ps { color: #53cdf7; fill: #0a2430; }
.ae { color: #cfa2fb; fill: #230c4a; }
.ai { color: #f7932f; fill: #301a06; }
.an { color: #f4492b; fill: #240703; }
.dw { color: #8df548; fill: #0d1e09; }
.xd { color: #f347bd; fill: #2b0220; }
.id { color: #f2619c; fill: #2e0714; }
```
